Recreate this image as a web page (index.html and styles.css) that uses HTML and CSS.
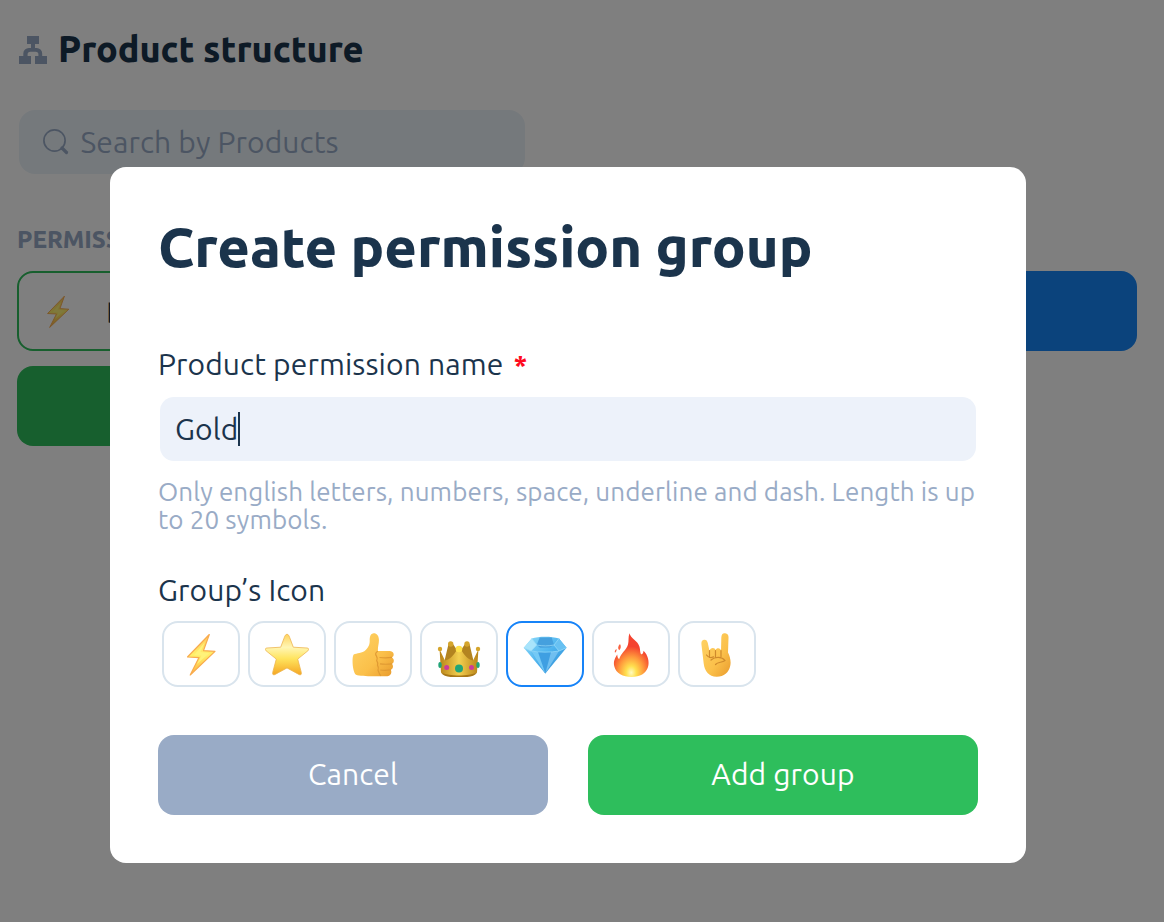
FILE: index.html
```
<!DOCTYPE html>
<html lang="en">
<head>
<meta charset="utf-8">
<title>Product structure</title>
<link rel="stylesheet" href="styles.css">
</head>
<body>
<svg class="defs" width="0" height="0" aria-hidden="true">
  <defs>
    <linearGradient id="boltFill" x1="0" y1="0" x2="0" y2="1"><stop offset="0" stop-color="#ffc75c"/><stop offset=".5" stop-color="#fff06a"/><stop offset="1" stop-color="#ffb340"/></linearGradient>
    <linearGradient id="starFill" x1="0" y1="0" x2="0" y2="1"><stop offset="0" stop-color="#ffd35e"/><stop offset=".32" stop-color="#fff6b5"/><stop offset=".6" stop-color="#ffe45e"/><stop offset="1" stop-color="#f5a623"/></linearGradient>
    <linearGradient id="handFill" x1="0" y1="0" x2="1" y2="1"><stop offset="0" stop-color="#ffd467"/><stop offset=".6" stop-color="#fbc04a"/><stop offset="1" stop-color="#e89a2c"/></linearGradient>
    <linearGradient id="crownFill" x1="0" y1="0" x2="1" y2="0"><stop offset="0" stop-color="#b98418"/><stop offset=".5" stop-color="#f3cf50"/><stop offset="1" stop-color="#b98418"/></linearGradient>
    <linearGradient id="gemFill" x1="0" y1="0" x2="1" y2="1"><stop offset="0" stop-color="#8fdcfa"/><stop offset=".5" stop-color="#4db3ee"/><stop offset="1" stop-color="#2b86d0"/></linearGradient>
    <radialGradient id="fireFill" cx=".5" cy=".9" r=".75"><stop offset="0" stop-color="#fffbc0"/><stop offset=".2" stop-color="#ffe04f"/><stop offset=".48" stop-color="#ff9a3c"/><stop offset=".8" stop-color="#f4432f"/></radialGradient>
    <symbol id="bolt" viewBox="0 0 44 44">
      <path d="M30.300 1.500 8.500 24 20 24.600 11.200 42 36 18.400 24.500 17.600Z" fill="url(#boltFill)" stroke="#f9ab4e" stroke-width="1.200" stroke-linejoin="round"/>
      <path d="M26 9 15 22.200 22.500 22.600 18 31 30.500 20 21.500 19Z" fill="#fff37a"/>
    </symbol>
  </defs>
</svg>

<main class="page">
  <h1 class="page-title">
    <svg class="page-title-icon" viewBox="0 0 28 28"><path d="M8 0h12v8h-4v4h1.500A5.500 5.500 0 0 1 23.200 17.500V20H28v8H16v-8h3.400v-1.500a2.800 2.800 0 0 0-2.800-2.800h-5.200a2.800 2.800 0 0 0-2.800 2.800V20H12v8H0v-8h4.300v-2.500A5.500 5.500 0 0 1 10 12h2V8H8z" fill="#99abc6"/></svg>
    <span>Product structure</span>
  </h1>
  <div class="search">
    <svg class="search-icon" viewBox="0 0 26 26"><circle cx="11.500" cy="11.500" r="10.600" fill="none" stroke="#99abc6" stroke-width="1.700"/><path d="m19 19 4.500 4.500" stroke="#99abc6" stroke-width="3.200" stroke-linecap="round"/></svg>
    <span>Search by Products</span>
  </div>
  <h2 class="section-title">PERMISSION</h2>
  <div class="row">
    <div class="group-card"><svg class="group-icon"><use href="#bolt"/></svg><span>Default</span></div>
    <div class="blue-button"></div>
  </div>
  <div class="green-button"></div>
</main>

<div class="overlay">
  <form class="modal">
    <h2 class="modal-title">Create permission group</h2>
    <div class="label"><span>Product permission name</span><span class="required">*</span></div>
    <div class="input"><span>Gold</span><i class="caret"></i></div>
    <p class="hint"><span>Only english letters, numbers, space, underline and dash. Length is up</span><br><span>to 20 symbols.</span></p>
    <div class="label icon-label"><span>Group’s Icon</span></div>
    <div class="icons">
      <div class="icon-option"><svg class="emoji"><use href="#bolt"/></svg></div>
      <div class="icon-option"><svg class="emoji" viewBox="0 0 44 44"><path d="M22 1.300c1.400 0 2.100 1.500 2.600 3l3.700 9.900 13.800.8c1.900.2 2 1.700.8 2.800l-10.200 8.300 3.600 13.300c.5 2.200-.8 3.100-2.500 2L22 34.900l-11.800 6.500c-1.700 1.100-3 .2-2.500-2l3.600-13.300L1.100 17.800c-1.200-1.100-1.100-2.600.8-2.800l13.800-.8 3.700-9.900c.5-1.500 1.200-3 2.600-3Z" fill="url(#starFill)" stroke="#eeb550" stroke-width=".8"/></svg></div>
      <div class="icon-option"><svg class="emoji" viewBox="0 0 44 44"><path d="M22 .4c3.500-.5 5.600 2.300 5.900 5.800.3 4-1.200 7.300-1 11.800H39c4.500.3 4.500 5.500 2 6.400 2.600 1.500 2.300 5.500-.2 6.400 2 1.700 1.300 5.200-1 6 1.500 3-.2 6.200-3.300 6.500H22c-6.500 0-14-.3-17-1.500-3.500-2.500-4.500-17.500-2.300-20.300 3-1.500 8.500-1 12-4.500 3.500-4 4-6 4-9.600 0-3.500.5-6.500 3.300-7Z" fill="url(#handFill)"/><path d="M41 24.400c-4 .6-8 .6-12.500.1M41 30.800c-4 .6-8 .6-12 .1M39.800 36.900c-4 .6-7.500.6-10.500.1M27 18.200c-2.500 1-3 3-1.500 5 1 1.500 1 3 .2 4.500 1 1.500 1.500 3 .8 4.500 1 1.500 1 3.500.5 5 1 2 1 4 3 5.500" fill="none" stroke="#e09a33" stroke-width="1.200"/></svg></div>
      <div class="icon-option"><svg class="emoji" viewBox="0 0 44 44"><path d="m7 30 4.500-19h4.500l6 9 6-9h4.500L37 30Z" fill="#b38420"/><path d="M2.600 16.500 8 27.500c5-1 8.500-5 11.500-10L22 16l2.500 1.500c3 5 6.500 9 11.500 10l5.400-11L40 39.500c-5 5.500-31 5.500-36 0Z" fill="url(#crownFill)"/><path d="M4 39.500c8 4 28 4 36 0-3 4.700-9 4.700-18 4.700s-15 0-18-4.700Z" fill="#a87817"/><g fill="#d5a52c"><circle cx="3" cy="16" r="2.200"/><circle cx="13.700" cy="11" r="2.700"/><circle cx="30" cy="11" r="2.700"/><circle cx="41" cy="16" r="2.200"/></g><circle cx="22" cy="16" r="3.300" fill="#ffe24b"/><g fill="#22a578"><circle cx="22" cy="35.500" r="4"/><ellipse cx="3" cy="32" rx="1.700" ry="3"/><ellipse cx="41" cy="32" rx="1.700" ry="3"/></g><g fill="#cc3c98"><circle cx="9.700" cy="34.500" r="2.500"/><circle cx="34.500" cy="34.500" r="2.500"/></g></svg></div>
      <div class="icon-option selected"><svg class="emoji" viewBox="0 0 44 44"><path d="M8.700 5.500C16 3 28 3 36 5.500l7.500 9.200L22.300 40.500.8 14.800Z" fill="url(#gemFill)"/><path d="M.8 14.800 8.700 5.500l5 6.500L8 18Z" fill="#a9e4fb"/><path d="m13.700 12 3-7.500h12L31 12l-4 2.500-10 .3Z" fill="#45a0de"/><path d="M31 12 36 5.500l7.500 9.200L36 18Z" fill="#68c1f2"/><path d="M8 18c8 1.500 20 1.500 28 0L22.300 40.500Z" fill="#3f9fe2"/><path d="m8 18 14.300 22.500L15 19Z" fill="#74c9f5"/><path d="M28 19l8-1-13.700 22.500Z" fill="#70bff0"/><path d="M.8 14.800 8 18c8 1.500 20 1.500 28 0l7.500-3.300M8.700 5.500l5 6.500L8 18M36 5.500 31 12l5 6M13.700 12c6 1.200 12 1.200 17.300 0" fill="none" stroke="#9bdcf9" stroke-width=".7"/></svg></div>
      <div class="icon-option"><svg class="emoji" viewBox="0 0 44 44"><path d="M20.500.3c1 5 8.500 7.500 10 13.500.8 3 .5 6 1.500 7.500 1.500.3 2.500-1.500 2.500-3.500C39 22 40.500 29 39 34c-2 6.500-8 10-16.500 10S7 40.500 5.200 33c-1-5 1-8 3-11.500.3 2.500.7 4 2 4.500C12 20 17.500 17 19 11.500 20 8 19 4 20.500.3Z" fill="url(#fireFill)"/><path d="M11 11c1.500 2.500.8 5-.8 6.300C8.500 15.500 9 13 11 11ZM7.500 16c.3 2-.3 3-1.500 3.700C5.400 18.400 6 17 7.500 16Z" fill="#f9603e"/></svg></div>
      <div class="icon-option"><svg class="emoji" viewBox="0 0 44 44"><path d="M8.300 7c2.300-.8 4 .5 4.500 3l1.700 8c.5-3.500 5.500-4 6-.8 1-3 5.300-2.500 5.500.5l.3-13C26.500 1 28-.2 30.200.3c2.500.4 3.500 2 3.300 4.700L33 19.500c2 4 3.300 9 2.200 13.500C34 39.500 28.500 44 21.500 43.800 14 43.600 9.500 38 8.700 30.500L6.500 12c-.3-2.500 0-4.400 1.800-5Z" fill="url(#handFill)"/><path d="M14.500 17.500v7M20.500 17.500v6.500M26 17.500v6M11.500 22c2.500 3.500 5 3 7 1.800M16 27c4-3.500 11-3.500 14 .5-3 2.500-7 1-9.500 4" fill="none" stroke="#cf8a2c" stroke-width="1.200" stroke-linecap="round"/></svg></div>
    </div>
    <div class="actions">
      <div class="button cancel"><span>Cancel</span></div>
      <div class="button add"><span>Add group</span></div>
    </div>
  </form>
</div>
</body>
</html>
```
FILE: styles.css
```
* { box-sizing: border-box; }
body {
  margin: 0;
  width: 1164px;
  height: 922px;
  overflow: hidden;
  background: #fff;
  color: #1b344c;
  font-family: Ubuntu, "Noto Sans", sans-serif;
  font-weight: 450;
  letter-spacing: .12px;
}
.defs { display: block; position: absolute; }
h1, h2, p { margin: 0; }
h1, h2 { font-weight: 800; letter-spacing: -.05px; }
span { white-space: nowrap; }
.page { padding: 28px 27px 0 17px; }
.page-title { display: flex; align-items: center; gap: 11px; height: 44px; padding-left: 2px; font-size: 36px; line-height: 42px; }
.page-title span { padding-bottom: 3px; }
.page-title-icon { width: 28px; height: 28px; }
.search {
  display: flex; align-items: center; gap: 11.500px;
  width: 506px; height: 64px; margin: 38px 0 0 2px; padding-left: 24px;
  border-radius: 16px; background: #ebf3f9; color: #99abc6; font-size: 30px; line-height: 40px;
}
.search-icon { width: 26px; height: 26px; }
.section-title { margin-top: 50px; height: 32px; color: #99abc6; font-size: 24px; line-height: 32px; }
.row { display: flex; justify-content: space-between; margin-top: 15px; }
.group-card {
  display: flex; align-items: center; gap: 31px; width: 545px; height: 80px; padding: 2px 0 0 22px;
  border: 2px solid #2ebe5c; border-radius: 16px; font-size: 30px;
}
.group-icon { width: 34px; height: 34px; }
.blue-button { width: 545px; height: 80px; border-radius: 16px; background: #1687f8; }
.green-button { width: 545px; height: 80px; margin-top: 15px; border-radius: 16px; background: #2ebe5c; }
.overlay {
  position: fixed; inset: 0; padding: 167px 138px 59px 110px;
  background: rgba(0, 0, 0, .5);
}
.modal { height: 696px; padding: 48px; border-radius: 16px; background: #fff; }
.modal-title { height: 64px; font-size: 56px; line-height: 64px; }
.label { display: flex; align-items: center; gap: 10px; height: 40px; margin-top: 65px; font-size: 30px; line-height: 40px; }
.required { padding-top: 2px; color: #ff0a1e; font-size: 28px; font-weight: 700; }
.input {
  display: flex; align-items: center; height: 64px; margin: 13px 2px 0; padding-left: 15px;
  border-radius: 14px; background: #edf2fa; font-size: 30px; line-height: 40px;
}
.caret { width: 2px; height: 34px; background: #1b344c; }
.hint { margin-top: 17px; height: 56px; color: #99abc6; font-size: 26px; line-height: 28px; }
.icon-label { margin-top: 36px; }
.icons { display: flex; gap: 8px; margin: 11px 0 0 4px; }
.icon-option {
  display: flex; align-items: center; justify-content: center; width: 78px; height: 66px; padding-top: 2px;
  border: 2px solid #d9e4ed; border-radius: 16px;
}
.icon-option.selected { border-color: #1683f8; }
.emoji { width: 44px; height: 44px; }
.actions { display: flex; gap: 40px; margin-top: 48px; }
.button {
  display: flex; align-items: center; justify-content: center; flex: 1; height: 80px; padding-bottom: 2px;
  border-radius: 16px; color: #fff; font-size: 30px; line-height: 40px;
}
.cancel { background: #99abc6; }
.add { background: #2ebe5c; }
```
